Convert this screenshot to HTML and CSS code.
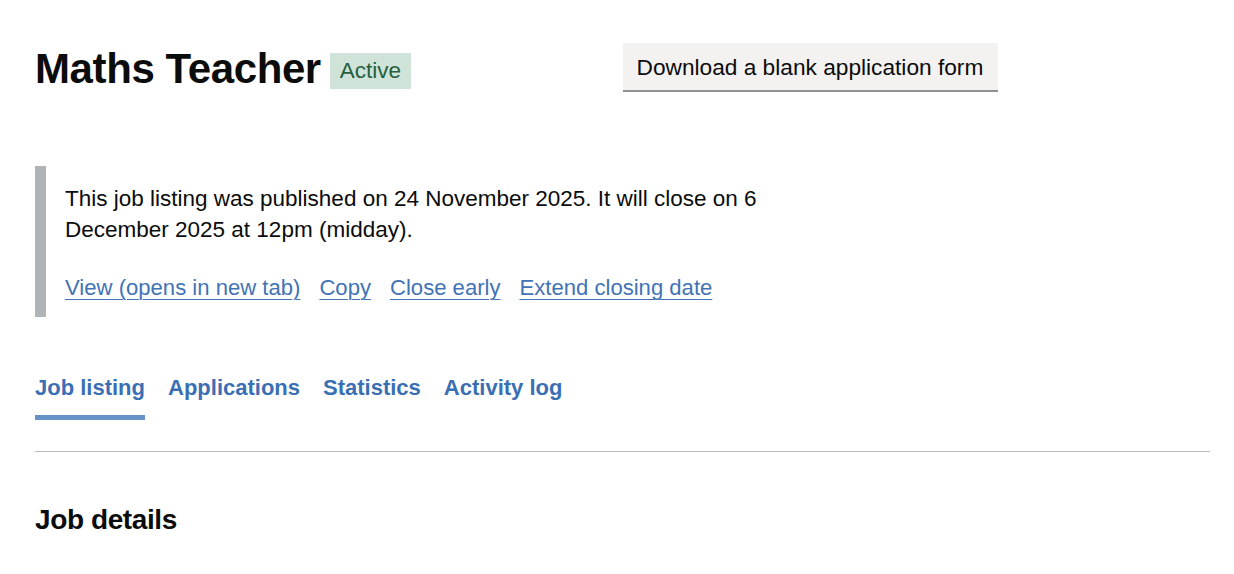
FILE: index.html
```html
<!DOCTYPE html>
<html lang="en">
<head>
<meta charset="utf-8">
<title>Maths Teacher</title>
<link rel="stylesheet" href="styles.css">
</head>
<body>
<main class="page">
  <div class="header-row">
    <div class="title-col">
      <h1 class="title">Maths Teacher</h1>
      <strong class="tag">Active</strong>
    </div>
    <div class="action-col">
      <a class="button" href="#">Download a blank application form</a>
    </div>
  </div>

  <div class="inset">
    <p class="inset-text">This job listing was published on 24 November 2025. It will close on 6 December 2025 at 12pm (midday).</p>
    <ul class="link-list">
      <li><a class="link" href="#">View (opens in new tab)</a></li>
      <li><a class="link" href="#">Copy</a></li>
      <li><a class="link" href="#">Close early</a></li>
      <li><a class="link" href="#">Extend closing date</a></li>
    </ul>
  </div>

  <nav class="tabs">
    <ul class="tab-list">
      <li class="tab tab-current"><a href="#">Job listing</a></li>
      <li class="tab"><a href="#">Applications</a></li>
      <li class="tab"><a href="#">Statistics</a></li>
      <li class="tab"><a href="#">Activity log</a></li>
    </ul>
  </nav>

  <h2 class="section-heading">Job details</h2>
</main>
</body>
</html>
```

FILE: styles.css
```css
* { box-sizing: border-box; }

html, body {
  margin: 0;
  padding: 0;
  background: #ffffff;
}

body {
  font-family: "Liberation Sans", Arial, sans-serif;
  color: #0b0c0c;
  font-size: 22.5px;
  line-height: 31px;
}

.page {
  margin: 0 24px 0 35px;
  padding-top: 43px;
}

.header-row {
  display: grid;
  grid-template-columns: 1fr 1fr;
  align-items: start;
}

.title-col {
  display: flex;
  align-items: flex-start;
  gap: 9px;
}

.title {
  margin: 1px 0 0;
  font-size: 42px;
  line-height: 50px;
  font-weight: 700;
  letter-spacing: -0.4px;
}

.tag {
  margin-top: 10px;
  display: inline-block;
  height: 36px;
  line-height: 36px;
  padding: 0 10px;
  background: #cfe3d9;
  color: #255f3e;
  font-weight: 400;
  font-size: 22.5px;
}

.action-col {
  display: flex;
}

.button {
  display: inline-block;
  padding: 9px 15px 8px 14px;
  line-height: 30px;
  background: #f3f2f1;
  color: #0b0c0c;
  text-decoration: none;
  box-shadow: 0 2px 0 #929191;
  font-size: 22.7px;
}

.inset {
  margin-top: 72px;
  width: 783px;
  border-left: 11px solid #b1b4b6;
  padding: 17px 19px 14px 19px;
}

.inset-text {
  margin: 0 0 27px;
}

.link-list {
  list-style: none;
  margin: 0;
  padding: 0;
  display: flex;
  gap: 19px;
}

.link {
  font-size: 22.1px;
  color: #4273b5;
  text-decoration: underline;
  text-decoration-thickness: 1px;
  text-underline-offset: 4px;
}

.tabs {
  margin-top: 55px;
  border-bottom: 1px solid #b9bbbd;
  padding-bottom: 31px;
}

.tab-list {
  list-style: none;
  margin: 0;
  padding: 0;
  display: flex;
  gap: 23px;
}

.tab {
  padding-bottom: 12px;
  border-bottom: 5px solid transparent;
}

.tab a {
  font-size: 22px;
  font-weight: 700;
  color: #3b6fb3;
  text-decoration: none;
}

.tab-current {
  border-bottom-color: #6692c8;
}

.section-heading {
  margin: 50px 0 0;
  font-size: 28px;
  line-height: 35px;
  font-weight: 700;
  letter-spacing: -0.4px;
}
```
